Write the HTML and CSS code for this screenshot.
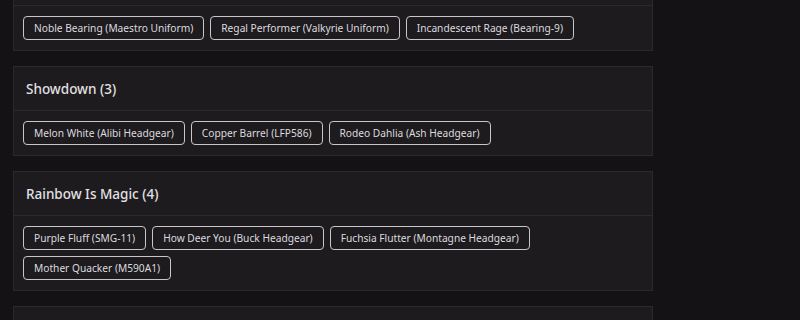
FILE: index.html
```html
<!DOCTYPE html>
<html>
<head>
<meta charset="utf-8">
<link rel="stylesheet" href="styles.css">
</head>
<body>
<div class="list">
  <section class="card">
    <header class="card-head"></header>
    <div class="card-body">
      <span class="chip">Noble Bearing (Maestro Uniform)</span>
      <span class="chip">Regal Performer (Valkyrie Uniform)</span>
      <span class="chip">Incandescent Rage (Bearing-9)</span>
    </div>
  </section>
  <section class="card">
    <header class="card-head">Showdown (3)</header>
    <div class="card-body">
      <span class="chip">Melon White (Alibi Headgear)</span>
      <span class="chip">Copper Barrel (LFP586)</span>
      <span class="chip">Rodeo Dahlia (Ash Headgear)</span>
    </div>
  </section>
  <section class="card">
    <header class="card-head">Rainbow Is Magic (4)</header>
    <div class="card-body">
      <span class="chip">Purple Fluff (SMG-11)</span>
      <span class="chip">How Deer You (Buck Headgear)</span>
      <span class="chip">Fuchsia Flutter (Montagne Headgear)</span>
      <span class="chip">Mother Quacker (M590A1)</span>
    </div>
  </section>
  <section class="card">
    <header class="card-head"></header>
    <div class="card-body"></div>
  </section>
</div>
</body>
</html>
```
FILE: styles.css
```css
html, body {
  margin: 0;
  padding: 0;
  background: #141215;
  font-family: "Noto Sans", "DejaVu Sans", sans-serif;
  color: #e2e0e4;
}
body {
  overflow: hidden;
  height: 320px;
}
.list {
  width: 640px;
  margin-left: 13px;
  margin-top: -39px;
  display: flex;
  flex-direction: column;
  gap: 15px;
}
.card {
  background: #1d1b1e;
  border: 1px solid #2b292c;
}
.card-head {
  height: 43px;
  display: flex;
  align-items: center;
  padding-left: 12px;
  font-size: 13.5px;
  font-weight: 500;
  border-bottom: 1px solid #2b292c;
}
.card-body {
  display: flex;
  flex-wrap: wrap;
  gap: 6px;
  padding: 10px 9px;
  min-height: 24px;
}
.chip {
  height: 22px;
  display: inline-flex;
  align-items: center;
  padding: 0 10px;
  border: 1px solid #c8c6ca;
  border-radius: 4px;
  font-size: 10.2px;
  color: #dcdade;
}
```
